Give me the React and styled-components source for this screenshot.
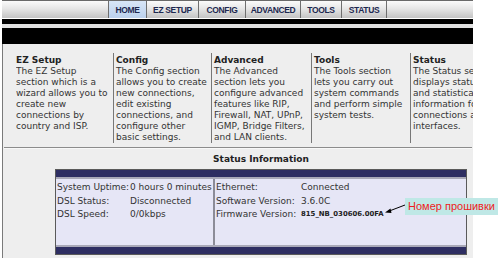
import React from "react";
import styled, { createGlobalStyle } from "styled-components";

const Global = createGlobalStyle`
  html, body { margin: 0; padding: 0; background: #ffffff; }
  body { width: 500px; height: 264px; overflow: hidden; font-family: "DejaVu Sans", Verdana, sans-serif; }
`;

const Page = styled.div`
  position: relative;
  width: 500px;
  height: 264px;
`;

const Frame = styled.div`
  margin-left: 2px;
  width: 471px;
  display: flex;
  flex-direction: column;
`;

const NavBar = styled.div`
  height: 17px;
  border-top: 1px solid #6a6a6a;
  background: linear-gradient(#fbfbfb, #e6e6e6 45%, #c4c4c4);
  display: flex;
  padding-left: 106px;
`;

const Tab = styled.div`
  width: ${(p) => p.$w}px;
  box-sizing: border-box;
  border-left: 1px solid #6f6f6f;
  ${(p) => (p.$last ? "border-right: 1px solid #6f6f6f;" : "")}
  display: flex;
  align-items: center;
  justify-content: center;
  font-family: "Liberation Sans", Arial, sans-serif;
  font-weight: bold;
  font-size: 8.5px;
  letter-spacing: -0.35px;
  color: #1d2850;
  background: ${(p) => (p.$active ? "linear-gradient(#d8e6f7, #bcd1ec)" : "transparent")};
`;

const Band = styled.div`
  height: ${(p) => p.$h}px;
  background: ${(p) => p.$c};
  margin-top: ${(p) => p.$mt || 0}px;
`;

const Panel = styled.div`
  background: #eeeeee;
  border-left: 1px solid #7a7a7a;
  height: 214px;
  display: flex;
  flex-direction: column;
  color: #333333;
  font-size: 9px;
`;

const Columns = styled.div`
  margin-top: 9px;
  padding-left: 13px;
  display: flex;
  align-items: flex-start;
  overflow: hidden;
`;

const Column = styled.div`
  box-sizing: border-box;
  flex: 0 0 ${(p) => p.$w}px;
  min-height: ${(p) => (p.$tall ? 90 : 0)}px;
  padding: 2px 0 0 ${(p) => (p.$first ? 0 : 2)}px;
  ${(p) => (p.$first ? "" : "border-left: 1px solid #777;")}
  line-height: 11px;
  white-space: nowrap;
  overflow: hidden;
`;

const ColTitle = styled.div`
  font-weight: bold;
  color: #222;
`;

const Rule = styled.div`
  margin: 4px 1px 0 1px;
  border-top: 1px solid #8c8c8c;
  border-bottom: 1px solid #f8f8f8;
`;

const StatusBlock = styled.div`
  margin-left: 52px;
  width: 412px;
  display: flex;
  flex-direction: column;
`;

const StatusTitle = styled.div`
  margin-top: 4px;
  text-align: center;
  font-weight: bold;
  color: #222;
  line-height: 12px;
`;

const Table = styled.div`
  margin-top: 4px;
  border: 1px solid #5a5a5a;
  background: #e6e6f6;
`;

const NavyBand = styled.div`
  height: 7px;
  background: #2e2e62;
  ${(p) => (p.$top ? "border-bottom: 2px solid #a9a9b8;" : "border-top: 2px solid #a9a9b8;")}
`;

const TableBody = styled.div`
  height: 66px;
  display: grid;
  grid-template-columns: 159px 1fr;
`;

const Cell = styled.div`
  padding: 2px 0 0 1px;
  ${(p) => (p.$divider ? "border-right: 2px solid #8c8c98;" : "")}
`;

const Row = styled.div`
  display: grid;
  grid-template-columns: ${(p) => p.$label}px auto;
  line-height: 13.5px;
  white-space: nowrap;
`;

const Mono = styled.span`
  font-weight: bold;
  font-size: 6.9px;
  color: #222;
`;

const Note = styled.div`
  position: absolute;
  left: 405px;
  top: 198px;
  width: 93px;
  height: 17px;
  background: #bfe8e6;
  color: #ee1c1c;
  font-family: "Liberation Sans", Arial, sans-serif;
  font-size: 11px;
  line-height: 17px;
  text-align: center;
`;

const Arrow = styled.svg`
  position: absolute;
  left: 380px;
  top: 200px;
`;

export default function App() {
  const tabs = [
    { t: "HOME", w: 38, active: true },
    { t: "EZ SETUP", w: 52 },
    { t: "CONFIG", w: 47 },
    { t: "ADVANCED", w: 55 },
    { t: "TOOLS", w: 41 },
    { t: "STATUS", w: 46, last: true },
  ];
  const cols = [
    { w: 97, title: "EZ Setup", lines: ["The EZ Setup", "section which is a", "wizard allows you to", "create new", "connections by", "country and ISP."], first: true },
    { w: 98, title: "Config", lines: ["The Config section", "allows you to create", "new connections,", "edit existing", "connections, and", "configure other", "basic settings."] },
    { w: 100, title: "Advanced", lines: ["The Advanced", "section lets you", "configure advanced", "features like RIP,", "Firewall, NAT, UPnP,", "IGMP, Bridge Filters,", "and LAN clients."] },
    { w: 99, title: "Tools", lines: ["The Tools section", "lets you carry out", "system commands", "and perform simple", "system tests."], tall: true },
    { w: 70, title: "Status", lines: ["The Status section", "displays status", "and statistical", "information for", "connections and", "interfaces."], tall: true },
  ];
  return (
    <Page>
      <Global />
      <Frame>
        <NavBar>
          {tabs.map((x) => (
            <Tab key={x.t} $w={x.w} $active={x.active} $last={x.last}>
              {x.t}
            </Tab>
          ))}
        </NavBar>
        <Band $h={5} $c="#000" $mt={1} />
        <Band $h={4} $c="#e2e2e2" />
        <Band $h={16} $c="#000" />
        <Panel>
          <Columns>
            {cols.map((c) => (
              <Column key={c.title} $w={c.w} $first={c.first} $tall={c.tall}>
                <ColTitle>{c.title}</ColTitle>
                {c.lines.map((l) => (
                  <div key={l}>{l}</div>
                ))}
              </Column>
            ))}
          </Columns>
          <Rule />
          <StatusBlock>
            <StatusTitle>Status Information</StatusTitle>
            <Table>
              <NavyBand $top />
              <TableBody>
                <Cell $divider>
                  <Row $label={73}><span>System Uptime:</span><span>0 hours 0 minutes</span></Row>
                  <Row $label={73}><span>DSL Status:</span><span>Disconnected</span></Row>
                  <Row $label={73}><span>DSL Speed:</span><span>0/0kbps</span></Row>
                </Cell>
                <Cell>
                  <Row $label={85}><span>Ethernet:</span><span>Connected</span></Row>
                  <Row $label={85}><span>Software Version:</span><span>3.6.0C</span></Row>
                  <Row $label={85}><span>Firmware Version:</span><Mono>815_NB_030606.00FA</Mono></Row>
                </Cell>
              </TableBody>
              <NavyBand />
            </Table>
          </StatusBlock>
        </Panel>
      </Frame>
      <Arrow width="30" height="20" viewBox="0 0 30 20">
        <line x1="25" y1="5" x2="8" y2="11.5" stroke="#000" strokeWidth="1" />
        <polygon points="5,12.6 10.5,8.4 11.5,13" fill="#000" />
      </Arrow>
      <Note>Номер прошивки</Note>
    </Page>
  );
}
